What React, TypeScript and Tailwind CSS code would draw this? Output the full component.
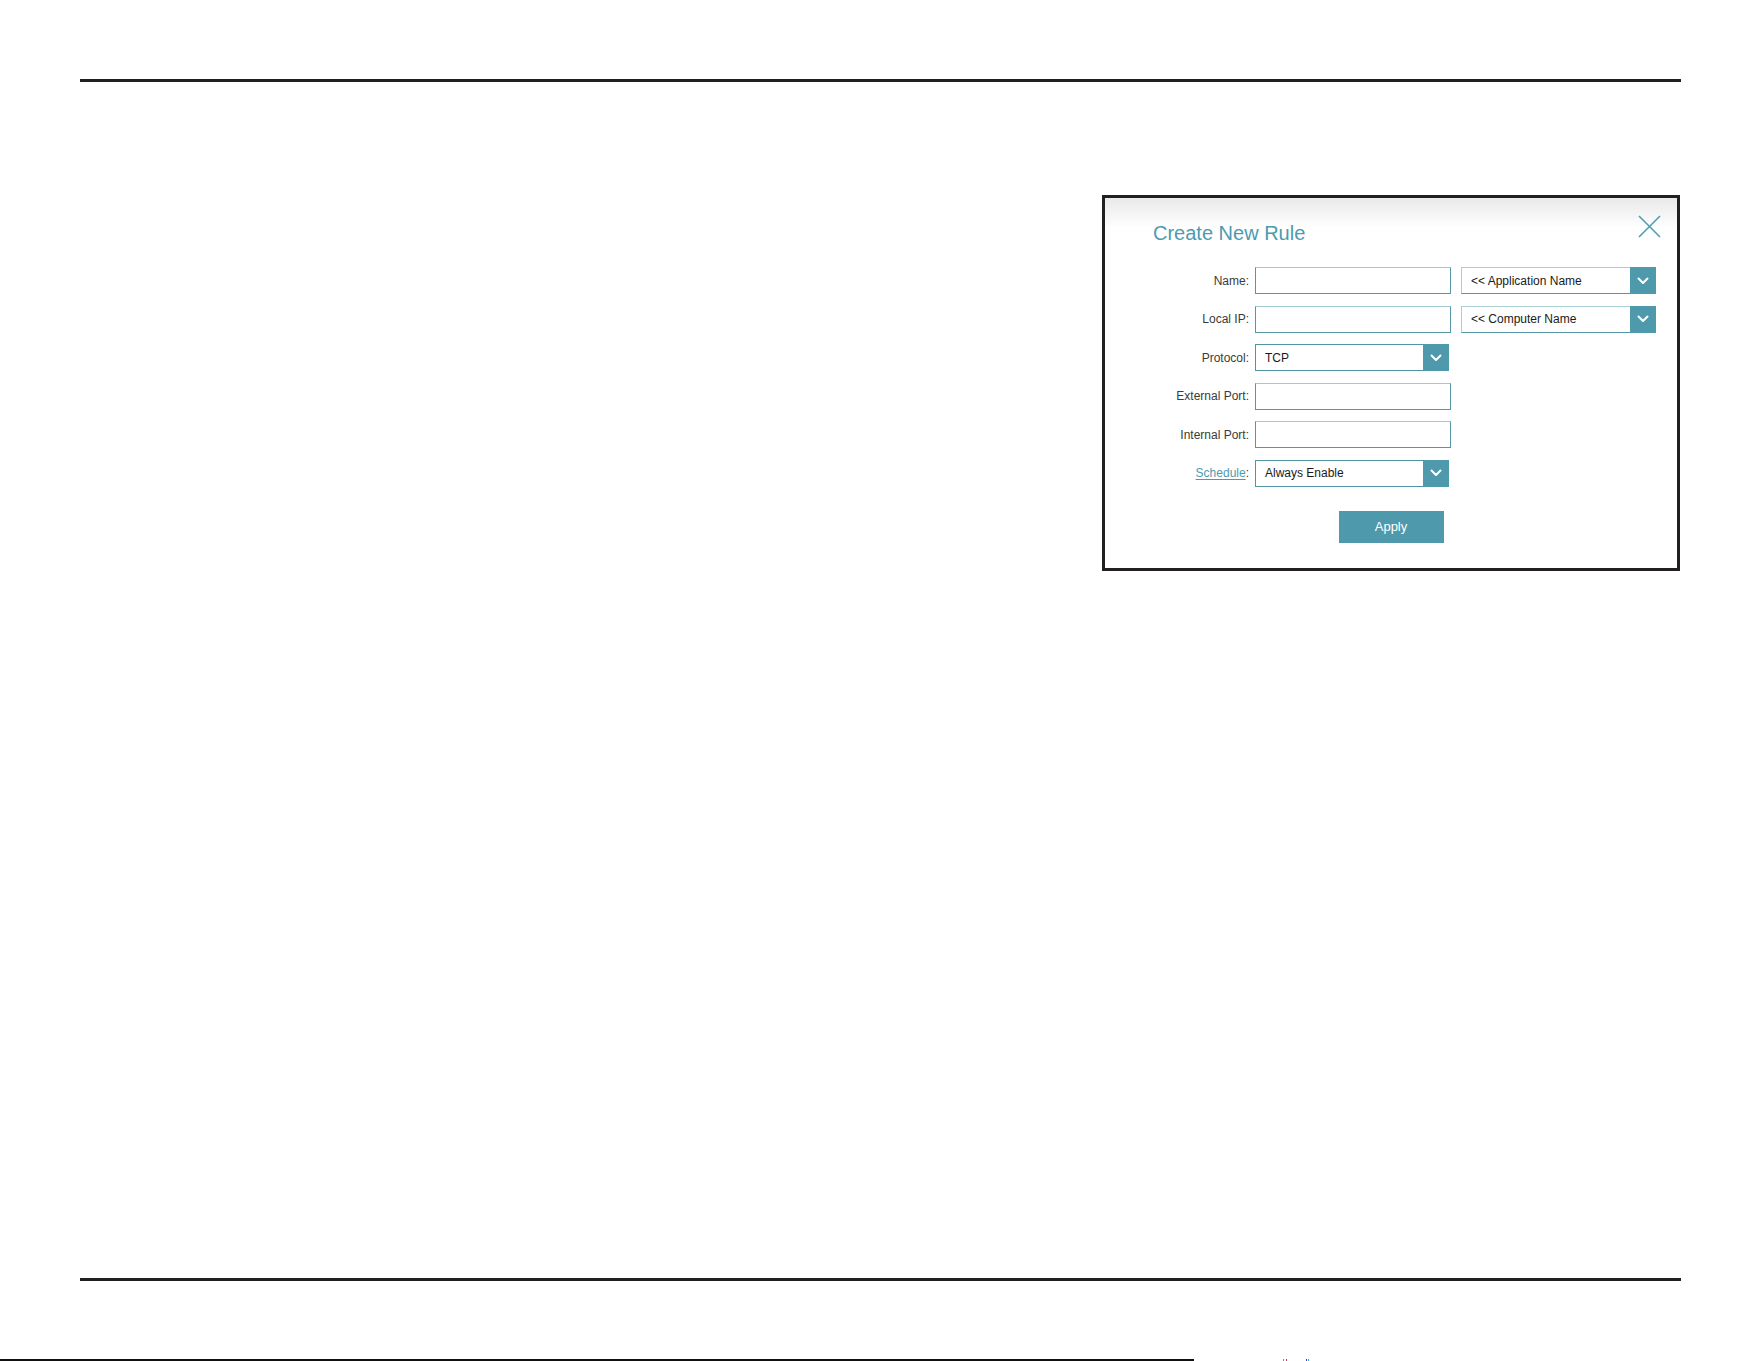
import React from "react";

const Chevron = () => (
  <svg width="12" height="8" viewBox="0 0 12 8" fill="none">
    <path d="M1.5 1.5 L6 6 L10.5 1.5" stroke="#ffffff" strokeWidth="2" strokeLinecap="round" strokeLinejoin="round" />
  </svg>
);

const TextBox = ({ w }: { w: string }) => (
  <div className={`${w} h-[27px] border border-[#5597a8] border-t-[#9fcad3] bg-white`} />
);

const Select = ({ w, text, light }: { w: string; text: string; light?: boolean }) => (
  <div
    className={`${w} h-[27px] flex border ${
      light ? "border-[#a9ced6] border-b-[#5597a8]" : "border-[#4f95a6]"
    } bg-white`}
  >
    <div className="flex-1 flex items-center pl-[9px] text-[12px] text-[#1a1a1a] leading-none">{text}</div>
    <div className="w-[26px] -my-px -mr-px bg-[#4f99ac] flex items-center justify-center">
      <Chevron />
    </div>
  </div>
);

const Label = ({ children }: { children: React.ReactNode }) => (
  <div className="w-[144px] text-right text-[12px] text-[#3a3a3a] pr-0 leading-none">{children}</div>
);

export default function App() {
  return (
    <div
      className="w-[1761px] h-[1361px] bg-white overflow-hidden flex flex-col"
      style={{ fontFamily: '"Liberation Sans", Arial, sans-serif' }}
    >
      {/* top rule */}
      <div className="mt-[79px] mx-[80px] h-[3px] bg-[#231f20]" />

      {/* main area */}
      <div className="h-[1196px] pt-[113px] pl-[80px] pr-[81px] flex justify-end items-start">
        <div className="relative w-[578px] border-[3px] border-[#231f20] bg-[linear-gradient(180deg,#e9e9e9_0px,#ffffff_30px)] pt-[23px] pb-[25px]">
          {/* close */}
          <div className="absolute top-[17px] right-[16px] w-[23px] h-[23px]">
            <svg width="23" height="23" viewBox="0 0 23 23" fill="none">
              <path d="M1 1 L22 22 M22 1 L1 22" stroke="#4e9db1" strokeWidth="1.6" />
            </svg>
          </div>

          <div className="pl-[48px] h-[24px] leading-[24px] text-[20px] text-[#4b9bb0]">Create New Rule</div>

          <div className="mt-[22px] flex flex-col gap-[11.6px]">
            <div className="flex items-center">
              <Label>Name:</Label>
              <div className="ml-[6px]">
                <TextBox w="w-[196px]" />
              </div>
              <div className="ml-[10px]">
                <Select w="w-[195px]" text="<< Application Name" light />
              </div>
            </div>
            <div className="flex items-center">
              <Label>Local IP:</Label>
              <div className="ml-[6px]">
                <TextBox w="w-[196px]" />
              </div>
              <div className="ml-[10px]">
                <Select w="w-[195px]" text="<< Computer Name" light />
              </div>
            </div>
            <div className="flex items-center">
              <Label>Protocol:</Label>
              <div className="ml-[6px]">
                <Select w="w-[194px]" text="TCP" />
              </div>
            </div>
            <div className="flex items-center">
              <Label>External Port:</Label>
              <div className="ml-[6px]">
                <TextBox w="w-[196px]" />
              </div>
            </div>
            <div className="flex items-center">
              <Label>Internal Port:</Label>
              <div className="ml-[6px]">
                <TextBox w="w-[196px]" />
              </div>
            </div>
            <div className="flex items-center">
              <Label>
                <a className="text-[#4b9bb0] underline underline-offset-2 cursor-pointer">Schedule</a>:
              </Label>
              <div className="ml-[6px]">
                <Select w="w-[194px]" text="Always Enable" />
              </div>
            </div>
          </div>

          <div className="mt-[24px] flex justify-center">
            <button className="w-[105px] h-[32px] bg-[#4f99ac] text-white text-[13px] leading-none">Apply</button>
          </div>
        </div>
      </div>

      {/* bottom rule */}
      <div className="mx-[80px] h-[3px] bg-[#231f20]" />

      {/* footer strip */}
      <div className="mt-[78px] h-[2px] flex items-stretch">
        <div className="w-[1194px] bg-[#111111]" />
        <div className="ml-[89px] w-[1px] bg-[#2aa8e0]" />
        <div className="ml-[2px] w-[1px] bg-[#e0305a]" />
        <div className="ml-[19px] w-[1px] bg-[#3a3adf]" />
        <div className="ml-[1px] w-[1px] bg-[#20c0d0]" />
      </div>
    </div>
  );
}
